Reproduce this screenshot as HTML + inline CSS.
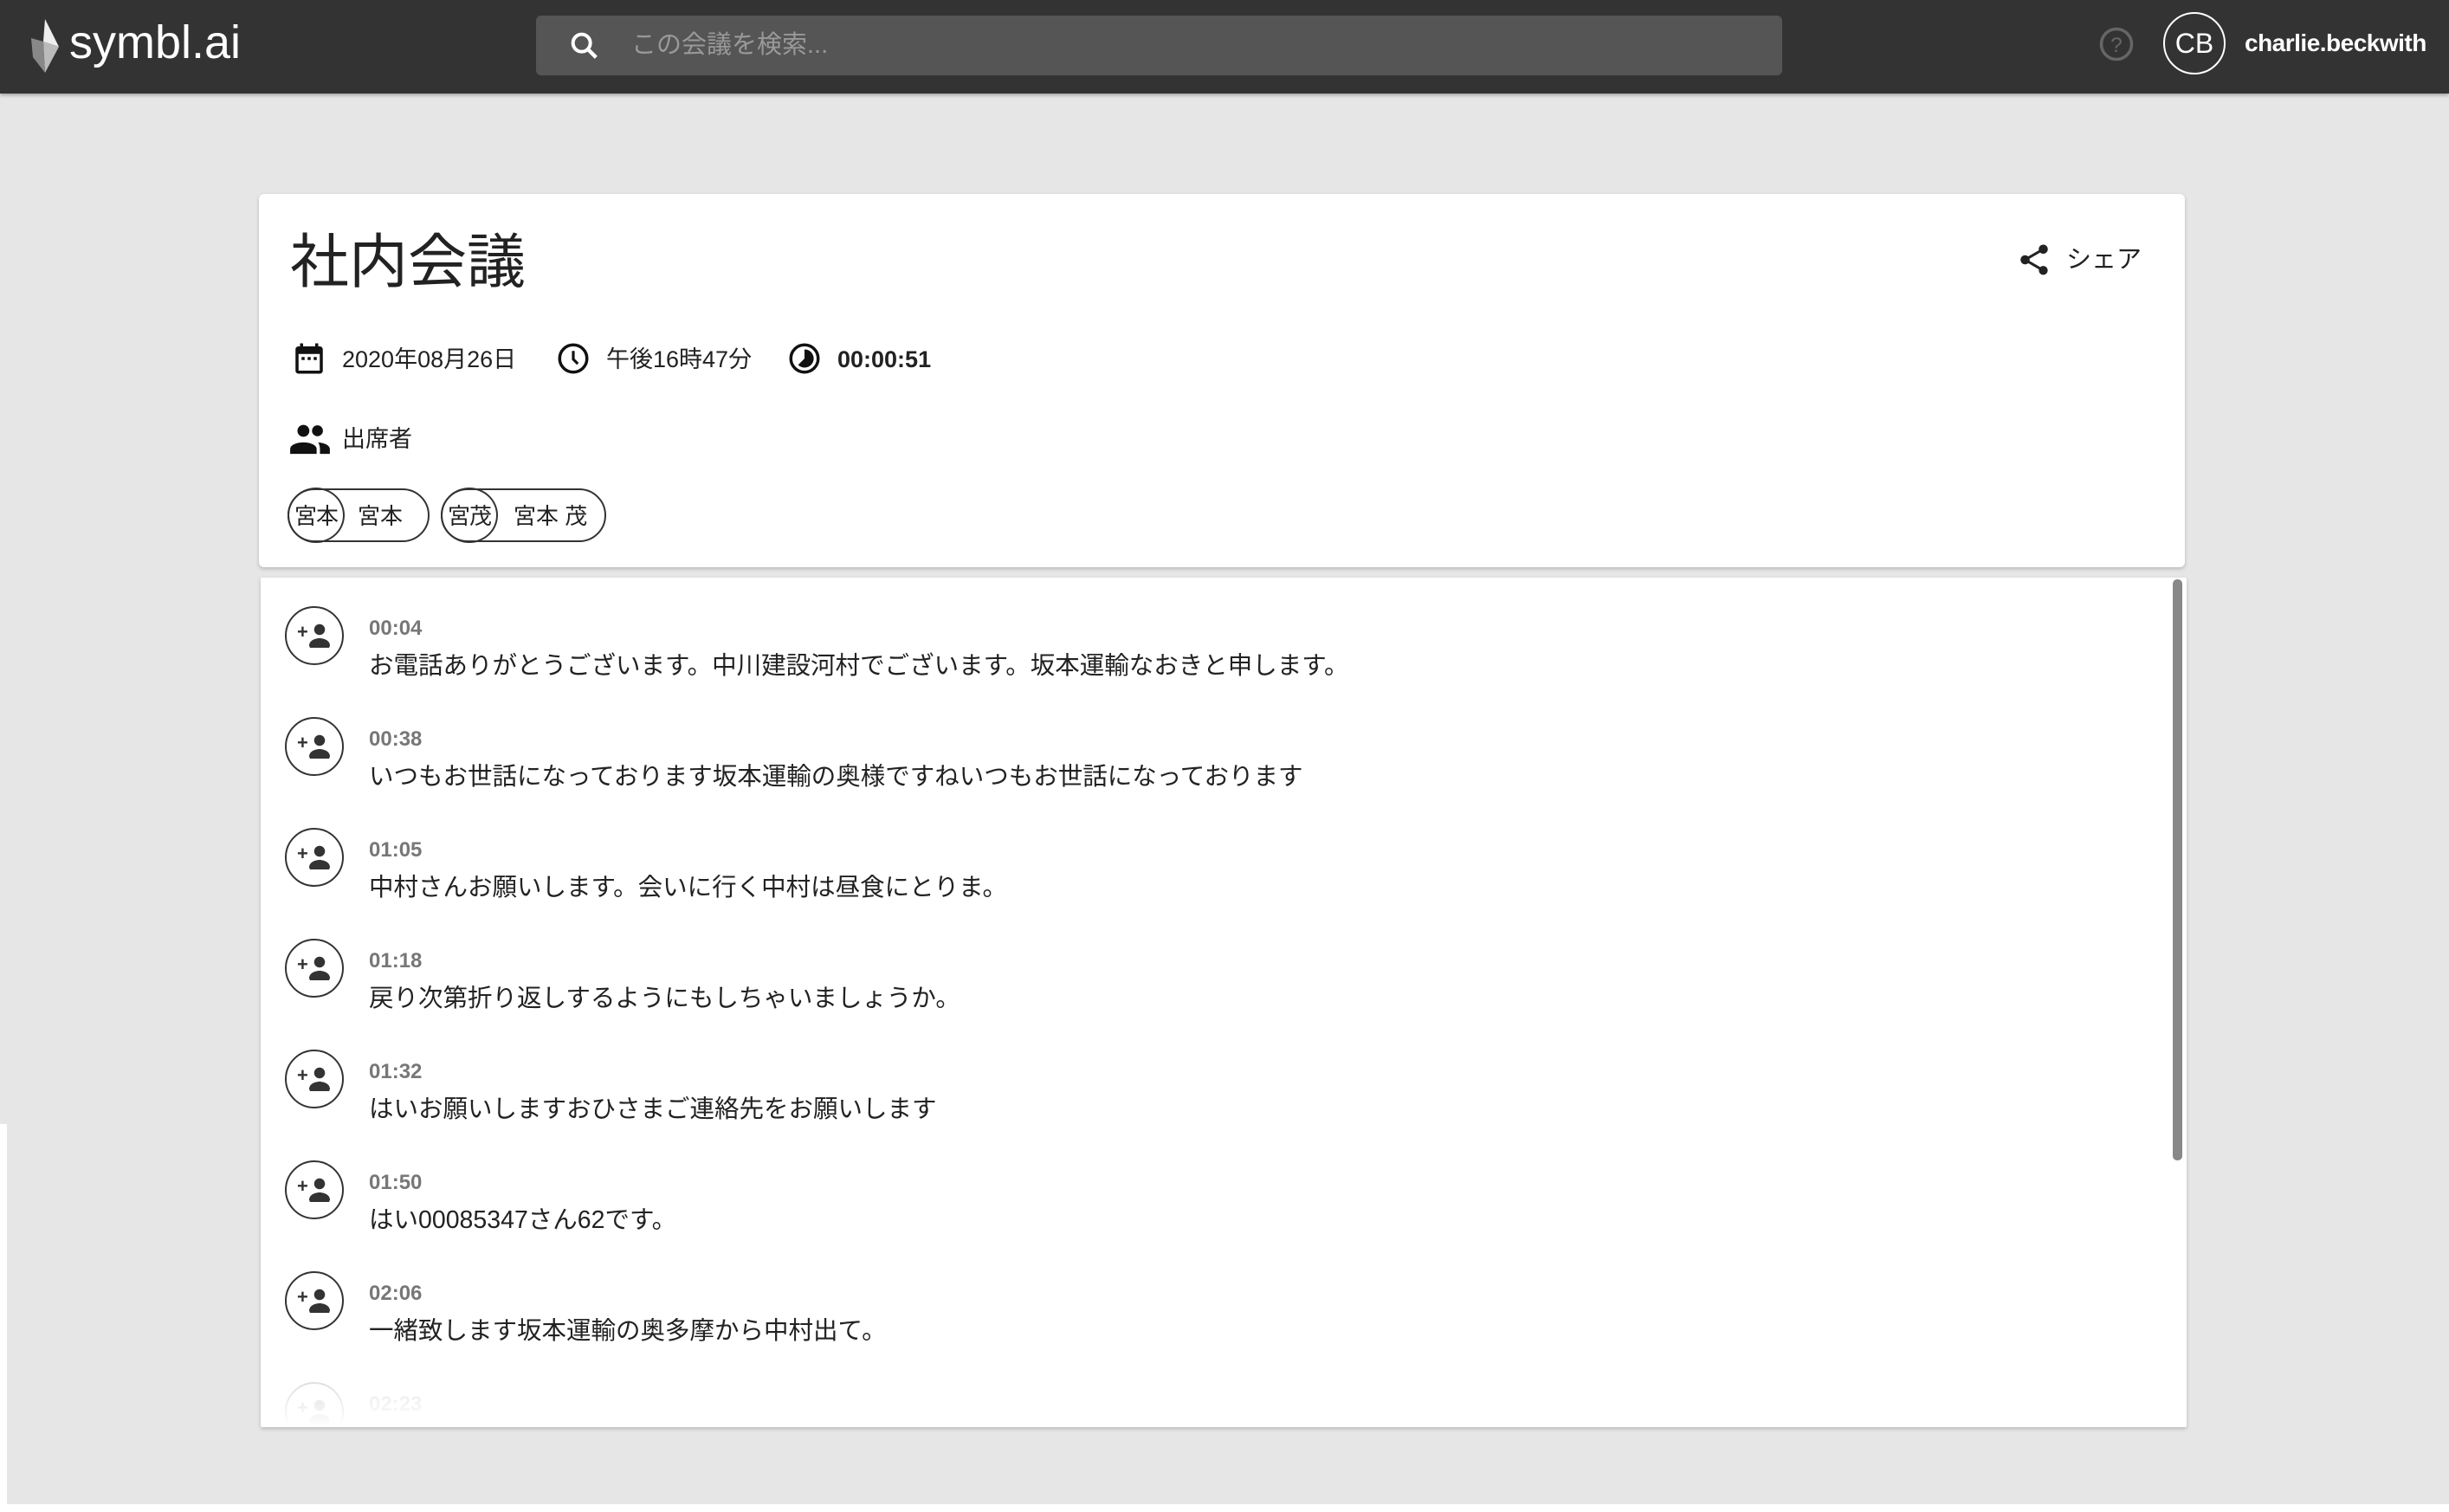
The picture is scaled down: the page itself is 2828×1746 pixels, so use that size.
<!DOCTYPE html>
<html><head><meta charset="utf-8">
<style>
*{margin:0;padding:0;box-sizing:border-box}
body{width:2828px;height:1746px;background:#e6e6e6;font-family:"Liberation Sans","Noto Sans CJK JP",sans-serif;position:relative;overflow:hidden;color:#222}
.abs{position:absolute}
.hdr{left:0;top:0;width:2828px;height:108px;background:#333;box-shadow:0 2px 4px rgba(0,0,0,.3)}
.card{background:#fff;border-radius:6px;box-shadow:0 2px 5px rgba(0,0,0,.2)}
.t{white-space:nowrap;line-height:1}
.item .av{position:absolute;left:329px;width:68px;height:68px;border:2px solid #333;border-radius:50%}
.ts{position:absolute;left:426px;font-size:24px;font-weight:bold;color:#777}
.tx{position:absolute;left:426px;font-size:28.5px;color:#222}
</style></head><body>
<div class="abs hdr"></div>
<svg class="abs" style="left:36px;top:22px" width="38" height="62" viewBox="0 0 38 62"><polygon points="16,0 32,32 14,26" fill="#eee"/><polygon points="14,26 32,32 16,62" fill="#bbb"/><polygon points="0,22 14,26 16,62 2,44" fill="#888"/></svg>
<div class="abs t" style="left:80px;top:22px;font-size:54px;color:#fff">symbl.ai</div>
<div class="abs" style="left:619px;top:18px;width:1439px;height:69px;background:#555;border-radius:6px"></div>
<svg class="abs" style="left:655px;top:33px" width="40" height="40" viewBox="0 0 24 24"><circle cx="10" cy="10" r="6" fill="none" stroke="#fff" stroke-width="2.4"/><line x1="14.5" y1="14.5" x2="20" y2="20" stroke="#fff" stroke-width="2.6"/></svg>
<div class="abs t" style="left:729px;top:38px;font-size:29px;color:#999">この会議を検索...</div>
<svg class="abs" style="left:2423px;top:30px" width="42" height="42" viewBox="0 0 24 24"><circle cx="12" cy="12" r="10" fill="none" stroke="#666" stroke-width="2"/><text x="12" y="17" font-size="14" text-anchor="middle" fill="#666" font-family="Liberation Sans">?</text></svg>
<div class="abs" style="left:2498px;top:14px;width:72px;height:72px;border:2px solid #fff;border-radius:50%;color:#fff;font-size:32px;text-align:center;line-height:68px">CB</div>
<div class="abs t" style="left:2592px;top:36px;font-size:28px;color:#fff;font-weight:bold;letter-spacing:-0.5px">charlie.beckwith</div>

<div class="abs card" style="left:299px;top:224px;width:2224px;height:431px"></div>
<div class="abs t" style="left:335px;top:269px;font-size:68px">社内会議</div>
<svg class="abs" style="left:2328px;top:279px" width="42" height="42" viewBox="0 0 24 24"><path d="M18 16.08c-.76 0-1.44.3-1.960.77L8.91 12.7c.05-.23.09-.46.09-.7s-.04-.47-.09-.7l7.05-4.11c.54.5 1.25.81 2.04.81 1.66 0 3-1.340 3-3s-1.34-3-3-3-3 1.34-3 3c0 .24.04.47.09.7L8.04 9.81C7.5 9.31 6.79 9 6 9c-1.66 0-3 1.34-3 3s1.34 3 3 3c.79 0 1.5-.31 2.04-.81l7.12 4.16c-.05.21-.08.43-.08.65 0 1.61 1.31 2.92 2.92 2.92 1.61 0 2.92-1.31 2.92-2.920s-1.31-2.92-2.92-2.92z" fill="#222"/></svg>
<div class="abs t" style="left:2386px;top:286px;font-size:29px">シェア</div>

<svg class="abs" style="left:336px;top:393px" width="42" height="42" viewBox="0 0 24 24"><path d="M19 4h-1V2h-2v2H8V2H6v2H5c-1.1 0-2 .9-2 2v14c0 1.1.9 2 2 2h14c1.1 0 2-.9 2-2V6c0-1.1-.9-2-2-2zm0 16H5V9h14v11zM7 11h2v2H7zm4 0h2v2h-2zm4 0h2v2h-2z" fill="#111"/></svg>
<div class="abs t" style="left:395px;top:402px;font-size:27px">2020年08月26日</div>
<svg class="abs" style="left:641px;top:393px" width="42" height="42" viewBox="0 0 24 24"><circle cx="12" cy="12" r="9" fill="none" stroke="#111" stroke-width="2"/><path d="M12 7v5.5l3 3" fill="none" stroke="#111" stroke-width="1.8"/></svg>
<div class="abs t" style="left:700px;top:402px;font-size:27px">午後16時47分</div>
<svg class="abs" style="left:908px;top:393px" width="42" height="42" viewBox="0 0 24 24"><circle cx="12" cy="12" r="9" fill="none" stroke="#111" stroke-width="2"/><path d="M12 6a6 6 0 1 1-4.2 10.2L12 12z" fill="#111"/></svg>
<div class="abs t" style="left:967px;top:402px;font-size:27px;font-weight:bold">00:00:51</div>

<svg class="abs" style="left:335px;top:486px" width="46" height="42" viewBox="0 0 24 22"><circle cx="8" cy="6" r="3.6" fill="#111"/><circle cx="16.5" cy="6" r="3.3" fill="#111"/><path d="M0 20v-3c0-2.5 4-4 8-4s8 1.5 8 4v3z" fill="#111"/><path d="M17 13c3 .2 7 1.5 7 4v3h-6v-3c0-1.6-.4-2.9-1-4z" fill="#111"/></svg>
<div class="abs t" style="left:395px;top:494px;font-size:27px">出席者</div>

<div class="abs" style="left:332px;top:564px;width:164px;height:62px;border:2px solid #333;border-radius:31px"></div>
<div class="abs" style="left:332px;top:563px;width:66px;height:64px;border:2px solid #333;border-radius:50%;font-size:26px;text-align:center;line-height:62px;white-space:nowrap;letter-spacing:-1px">宮本</div>
<div class="abs t" style="left:413px;top:583px;font-size:26px">宮本</div>
<div class="abs" style="left:509px;top:564px;width:191px;height:62px;border:2px solid #333;border-radius:31px"></div>
<div class="abs" style="left:509px;top:563px;width:66px;height:64px;border:2px solid #333;border-radius:50%;font-size:26px;text-align:center;line-height:62px;white-space:nowrap;letter-spacing:-1px">宮茂</div>
<div class="abs t" style="left:593px;top:583px;font-size:26px">宮本 茂</div>

<div class="abs card" style="left:301px;top:667px;width:2224px;height:981px;overflow:hidden;border-radius:2px">
<div class="item" style="position:absolute;left:-301px;top:-667px;width:2828px;height:1746px">
<div class="av" style="top:700px"></div><div class="ts t" style="top:714px">00:04</div><div class="tx t" style="top:755px">お電話ありがとうございます。中川建設河村でございます。坂本運輸なおきと申します。</div>
<div class="av" style="top:828px"></div><div class="ts t" style="top:842px">00:38</div><div class="tx t" style="top:883px">いつもお世話になっております坂本運輸の奥様ですねいつもお世話になっております</div>
<div class="av" style="top:956px"></div><div class="ts t" style="top:970px">01:05</div><div class="tx t" style="top:1011px">中村さんお願いします。会いに行く中村は昼食にとりま。</div>
<div class="av" style="top:1084px"></div><div class="ts t" style="top:1098px">01:18</div><div class="tx t" style="top:1139px">戻り次第折り返しするようにもしちゃいましょうか。</div>
<div class="av" style="top:1212px"></div><div class="ts t" style="top:1226px">01:32</div><div class="tx t" style="top:1267px">はいお願いしますおひさまご連絡先をお願いします</div>
<div class="av" style="top:1340px"></div><div class="ts t" style="top:1354px">01:50</div><div class="tx t" style="top:1395px">はい00085347さん62です。</div>
<div class="av" style="top:1468px"></div><div class="ts t" style="top:1482px">02:06</div><div class="tx t" style="top:1523px">一緒致します坂本運輸の奥多摩から中村出て。</div>
<div class="av" style="top:1596px;opacity:.35"></div><div class="ts t" style="top:1610px;opacity:.35">02:23</div>
</div>
<div class="abs" style="left:0;top:900px;width:2224px;height:81px;background:linear-gradient(rgba(255,255,255,.3),#fff)"></div>
<div class="abs" style="left:2208px;top:2px;width:11px;height:671px;background:#888;border-radius:5px"></div>
</div>
<div class="abs" style="left:0;top:1298px;width:8px;height:448px;background:#fff"></div>
<div class="abs" style="left:0;top:1737px;width:2828px;height:9px;background:#fff"></div>
<style>.item .av::after{content:"";position:absolute;left:18px;top:18px;width:32px;height:28px;background:
radial-gradient(circle at 20px 7px,#333 6px,transparent 6.5px),
radial-gradient(ellipse 12px 8px at 20px 25px,#333 98%,transparent 100%);}
.item .av::before{content:"+";position:absolute;left:12px;top:15px;font-size:22px;font-weight:bold;color:#333;font-family:"Liberation Sans",sans-serif}</style>
</body></html>
